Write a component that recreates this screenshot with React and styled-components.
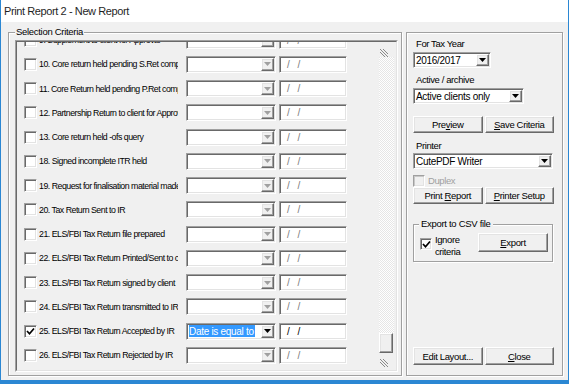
import React from 'react';
import styled, { createGlobalStyle, css } from 'styled-components';

const FONT = `"Liberation Sans", Arial, sans-serif`;

const GlobalStyle = createGlobalStyle`
  html, body {
    margin: 0;
    padding: 0;
    background: #f0f0f0;
  }
  body {
    font-family: ${FONT};
    color: #000;
  }
  * {
    box-sizing: border-box;
  }
`;

// the dialog's font is narrower than Arial, so every text is tightened a little
const uiText = css`
  font-size: 9.5px;
  letter-spacing: -0.4px;
`;

const raised = css`
  border: 1px solid;
  border-color: #ffffff #696969 #696969 #ffffff;
  box-shadow: inset -1px -1px #a0a0a0, inset 1px 1px #e3e3e3;
`;

const etched = css`
  border: 1px solid #a0a0a0;
  box-shadow: inset 1px 1px #ffffff, 1px 1px #ffffff;
`;

const Window = styled.div`
  width: 569px;
  height: 384px;
  display: flex;
  flex-direction: column;
  background: #f0f0f0;
  border: 1px solid #2b87d3;
  border-top: none;
  border-bottom-width: 4px;
  overflow: hidden;
`;

const TitleBar = styled.div`
  height: 22px;
  flex: none;
  display: flex;
  align-items: center;
  padding-left: 3px;
  background: #ffffff;
  font-size: 11px;
  letter-spacing: -0.4px;
  color: #1f1f1f;
`;

const Body = styled.div`
  flex: 1;
  display: flex;
  align-items: flex-start;
  padding: 4px 0 0 7px;
`;

const GroupBox = styled.fieldset`
  margin: 0;
  padding: 0 3px 3px 6px;
  width: 394px;
  height: 350px;
  min-width: 0;
  display: flex;
  flex-direction: column;
  ${etched}
`;

const Legend = styled.legend`
  padding: 0 ${({ $pad }) => $pad || 1}px;
  ${uiText}
  letter-spacing: -0.3px;
  line-height: 12px;
  background: #f0f0f0;
`;

const SunkenFrame = styled.div`
  flex: 1;
  margin-top: 2px;
  display: flex;
  border: 1px solid;
  border-color: #a0a0a0 #ffffff #ffffff #a0a0a0;
`;

const ScrollPane = styled.div`
  flex: 1;
  display: flex;
  overflow: hidden;
  border: 1px solid;
  border-color: #696969 #e3e3e3 #e3e3e3 #696969;
`;

const RowList = styled.div`
  flex: 1;
  margin-top: -14px;
  padding-left: 7px;
  display: flex;
  flex-direction: column;
`;

const Row = styled.div`
  height: 24.25px;
  flex: none;
  display: flex;
  align-items: center;
`;

const Box = styled.span`
  width: ${({ $size }) => $size || 13}px;
  height: ${({ $size }) => $size || 13}px;
  flex: none;
  display: flex;
  align-items: center;
  justify-content: center;
  background: ${({ $disabled }) => ($disabled ? '#f0f0f0' : '#ffffff')};
  border: 1px solid;
  border-color: #a0a0a0 #ffffff #ffffff #a0a0a0;
  box-shadow: inset 1px 1px ${({ $disabled }) => ($disabled ? '#c8c8c8' : '#696969')},
    inset -1px -1px #e3e3e3;
`;

const RowLabel = styled.span`
  width: 139px;
  margin-left: 2px;
  flex: none;
  overflow: hidden;
  white-space: nowrap;
  font-size: 8.8px;
  letter-spacing: -0.5px;
  line-height: 12px;
`;

const Field = styled.div`
  width: ${({ $w }) => $w}px;
  height: ${({ $h }) => $h || 17}px;
  margin-left: ${({ $ml }) => $ml || 0}px;
  flex: none;
  display: flex;
  align-items: stretch;
  padding: 1px;
  background: #ffffff;
  border: 1px solid;
  border-color: #a0a0a0 #ffffff #ffffff #a0a0a0;
  box-shadow: inset 1px 1px #696969, inset -1px -1px #e3e3e3;
  font-size: 10px;
`;

const FieldText = styled.span`
  flex: 1;
  display: flex;
  align-items: center;
  padding-left: ${({ $pl }) => $pl || 1}px;
  white-space: nowrap;
  overflow: hidden;
  color: ${({ $dim }) => ($dim ? '#7a7a7a' : '#000')};
  letter-spacing: ${({ $ls }) => $ls ?? -0.3}px;
`;

const Selected = styled.span`
  background: #3399ff;
  color: #ffffff;
  padding: 1px 1px 0 0;
  line-height: 11px;
`;

const DropButton = styled.span`
  width: 13px;
  flex: none;
  display: flex;
  align-items: center;
  justify-content: center;
  background: #f0f0f0;
  ${raised}
`;

const ScrollBar = styled.div`
  width: 15px;
  flex: none;
  margin: 3px 2px 1px 0;
  display: flex;
  flex-direction: column;
`;

const ScrollEnd = styled.div`
  height: ${({ $h }) => $h}px;
  flex: none;
  display: flex;
  align-items: ${({ $bottom }) => ($bottom ? 'flex-end' : 'flex-start')};
  padding: ${({ $bottom }) => ($bottom ? '0 0 1px 0' : '3px 0 0 0')};
`;

const Track = styled.div`
  flex: 1;
  background: repeating-conic-gradient(#ffffff 0 25%, #e6e6e6 0 50%) 0 0 / 2px 2px;
`;

const Thumb = styled.div`
  height: 20px;
  flex: none;
  margin-right: 1px;
  background: #f0f0f0;
  ${raised}
`;

const SidePanel = styled.div`
  width: 157px;
  height: 344px;
  margin: 6px 0 0 4px;
  padding: 5px 8px 10px 6px;
  display: flex;
  flex-direction: column;
  ${etched}
`;

const Caption = styled.div`
  margin: ${({ $mt }) => $mt || 0}px 0 0 3px;
  ${uiText}
  line-height: 12px;
  color: ${({ $dim }) => ($dim ? '#a0a0a0' : '#000')};
`;

const FieldSlot = styled.div`
  margin-top: ${({ $mt }) => $mt}px;
`;

const ButtonRow = styled.div`
  display: flex;
  gap: 2px;
  margin-top: ${({ $mt }) => $mt || 0}px;
`;

const Button = styled.button`
  flex: ${({ $w }) => ($w ? 'none' : 1)};
  width: ${({ $w }) => ($w ? `${$w}px` : 'auto')};
  height: ${({ $h }) => $h || 17}px;
  margin: 0;
  margin-top: ${({ $mt }) => $mt || 0}px;
  margin-left: ${({ $auto }) => ($auto ? 'auto' : 0)};
  padding: 0;
  font-family: ${FONT};
  ${uiText}
  letter-spacing: -0.35px;
  color: #000;
  background: #f0f0f0;
  ${raised}
`;

const CheckLine = styled.div`
  display: flex;
  align-items: center;
  margin-top: ${({ $mt }) => $mt || 0}px;
  height: 13px;
`;

const ExportGroup = styled.fieldset`
  margin: 14px 0 0;
  padding: 0 4px 0 5px;
  width: 140px;
  height: 44px;
  min-width: 0;
  display: flex;
  align-items: flex-start;
  ${etched}
`;

const ExportCheck = styled.div`
  margin: 8px 0 0 1px;
`;

const TwoLine = styled.div`
  margin: 4px 0 0 3px;
  ${uiText}
  line-height: 12px;
`;

const Spacer = styled.div`
  flex: 1;
`;

const Arrow = ({ dim }) => (
  <svg width="7" height="4" viewBox="0 0 7 4">
    <polygon points="0,0 7,0 3.5,4" fill={dim ? '#a0a0a0' : '#000'} />
  </svg>
);

const Check = () => (
  <svg width="9" height="9" viewBox="0 0 9 9">
    <polyline points="1,4 3.5,6.8 8,1.5" fill="none" stroke="#000" strokeWidth="1.7" />
  </svg>
);

const Hatch = () => (
  <svg width="10" height="10" viewBox="0 0 10 10">
    <g stroke="#8a8a8a" strokeWidth="1">
      <line x1="1" y1="1" x2="9" y2="9" />
      <line x1="1" y1="4" x2="6" y2="9" />
      <line x1="4" y1="1" x2="9" y2="6" />
    </g>
  </svg>
);

const criteria = [
  { label: '9. Supplement to client for Approval' },
  { label: '10. Core return held pending S.Ret completed' },
  { label: '11. Core Return held pending P.Ret completed' },
  { label: '12. Partnership Return to client for Approval' },
  { label: '13. Core return held -ofs query' },
  { label: '18. Signed incomplete ITR held' },
  { label: '19. Request for finalisation material made' },
  { label: '20. Tax Return Sent to IR' },
  { label: '21. ELS/FBI Tax Return file prepared' },
  { label: '22. ELS/FBI Tax Return Printed/Sent to client' },
  { label: '23. ELS/FBI Tax Return signed by client' },
  { label: '24. ELS/FBI Tax Return transmitted to IR' },
  { label: '25. ELS/FBI Tax Return Accepted by IR', checked: true, op: 'Date is equal to' },
  { label: '26. ELS/FBI Tax Return Rejected by IR' },
];

const CriteriaRow = ({ label, checked, op }) => (
  <Row>
    <Box>{checked && <Check />}</Box>
    <RowLabel>{label}</RowLabel>
    <Field $w={90} $ml={8}>
      <FieldText>{op && <Selected>{op}</Selected>}</FieldText>
      <DropButton>
        <Arrow dim={!checked} />
      </DropButton>
    </Field>
    <Field $w={68} $ml={3}>
      <FieldText $pl={6} $ls={2.5} $dim={!checked}>
        / /
      </FieldText>
    </Field>
  </Row>
);

const Select = ({ width, value }) => (
  <Field $w={width} $h={16}>
    <FieldText>{value}</FieldText>
    <DropButton>
      <Arrow />
    </DropButton>
  </Field>
);

const App = () => {
  return (
    <>
      <GlobalStyle />
      <Window>
        <TitleBar>Print Report 2 - New Report</TitleBar>
        <Body>
          <GroupBox>
            <Legend>Selection Criteria</Legend>
            <SunkenFrame>
              <ScrollPane>
                <RowList>
                  {criteria.map((c) => (
                    <CriteriaRow key={c.label} {...c} />
                  ))}
                </RowList>
                <ScrollBar>
                  <ScrollEnd $h={12}>
                    <Hatch />
                  </ScrollEnd>
                  <Track />
                  <Thumb />
                  <ScrollEnd $h={16} $bottom>
                    <Hatch />
                  </ScrollEnd>
                </ScrollBar>
              </ScrollPane>
            </SunkenFrame>
          </GroupBox>

          <SidePanel>
            <Caption>For Tax Year</Caption>
            <FieldSlot $mt={2}>
              <Select width={78} value="2016/2017" />
            </FieldSlot>
            <Caption $mt={6}>Active / archive</Caption>
            <FieldSlot $mt={2}>
              <Select width={111} value="Active clients only" />
            </FieldSlot>
            <ButtonRow $mt={12}>
              <Button>
                Pre<u>v</u>iew
              </Button>
              <Button>
                <u>S</u>ave Criteria
              </Button>
            </ButtonRow>
            <Caption $mt={7}>Printer</Caption>
            <FieldSlot $mt={1}>
              <Select width={140} value="CutePDF Writer" />
            </FieldSlot>
            <CheckLine $mt={5}>
              <Box $size={12} $disabled />
              <Caption $dim>Duplex</Caption>
            </CheckLine>
            <ButtonRow>
              <Button>
                Print <u>R</u>eport
              </Button>
              <Button>
                <u>P</u>rinter Setup
              </Button>
            </ButtonRow>
            <ExportGroup>
              <Legend $pad={2}>Export to CSV file</Legend>
              <ExportCheck>
                <Box $size={12}>
                  <Check />
                </Box>
              </ExportCheck>
              <TwoLine>
                Ignore
                <br />
                criteria
              </TwoLine>
              <Button $w={70} $h={19} $mt={3} $auto>
                <u>E</u>xport
              </Button>
            </ExportGroup>
            <Spacer />
            <ButtonRow>
              <Button $h={18}>Edit Layout...</Button>
              <Button $h={18}>
                <u>C</u>lose
              </Button>
            </ButtonRow>
          </SidePanel>
        </Body>
      </Window>
    </>
  );
};

export default App;
